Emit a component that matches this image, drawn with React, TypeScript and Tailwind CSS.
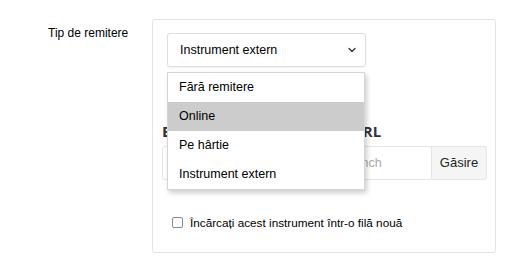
import { ChevronDown } from "lucide-react";

const OPTIONS = ["Fără remitere", "Online", "Pe hârtie", "Instrument extern"];

export default function App() {
  return (
    <div className="w-[521px] h-[269px] bg-white font-['Liberation_Sans',Arial,sans-serif] text-black">
      <div className="flex pl-[48px] pt-[19px]">
        {/* Field label */}
        <div className="w-[104px] pt-[6px] text-[12px] leading-[16px]">Tip de remitere</div>

        {/* Settings panel */}
        <div className="relative w-[344px] h-[234px] border border-[#e3e3e3] rounded-[3px]">
          <div className="ml-[14px] mt-[13px] w-[199px] h-[34px] flex items-center justify-between pl-[12px] pr-[7px] border border-[#dedede] rounded-[3px] shadow-[0_1px_2px_rgba(0,0,0,0.06)] text-[12.5px]">
            <span>Instrument extern</span>
            <ChevronDown size={12} strokeWidth={2.6} className="text-[#333]" />
          </div>

          <div className="ml-[9px] mt-[55px] font-['Open_Sans',sans-serif] font-bold text-[15px] leading-[18px] text-[#333]">
            Editați adresa de lansare URL
          </div>

          <div className="ml-[9px] mt-[6px] w-[325px] h-[34px] flex">
            <div className="flex-1 flex items-center pl-[12px] border border-[#e2e6ea] rounded-l-[3px] text-[12.5px] text-[#a8a8a8] whitespace-nowrap overflow-hidden">
              Introduceți adresa URL de tip Launch
            </div>
            <div className="w-[55px] flex items-center justify-center bg-[#f5f5f5] border border-l-0 border-[#e2e6ea] rounded-r-[3px] text-[13px] text-[#222]">
              Găsire
            </div>
          </div>

          <label className="flex items-center ml-[19px] mt-[34px] gap-[7px] text-[11.75px]">
            <span className="w-[11px] h-[11px] border border-[#8a8a8a] rounded-[2px] bg-white" />
            <span>Încărcați acest instrument într-o filă nouă</span>
          </label>

          {/* Open dropdown list */}
          <ul className="absolute left-[14px] top-[52px] w-[198px] bg-white border border-[#d6d6d6] shadow-[2px_3px_5px_rgba(0,0,0,0.2)] text-[12.5px]">
            {OPTIONS.map((opt) => (
              <li
                key={opt}
                className={`h-[29px] flex items-center pl-[11px] ${opt === "Online" ? "bg-[#cccccc]" : ""}`}
              >
                {opt}
              </li>
            ))}
          </ul>
        </div>
      </div>
    </div>
  );
}
